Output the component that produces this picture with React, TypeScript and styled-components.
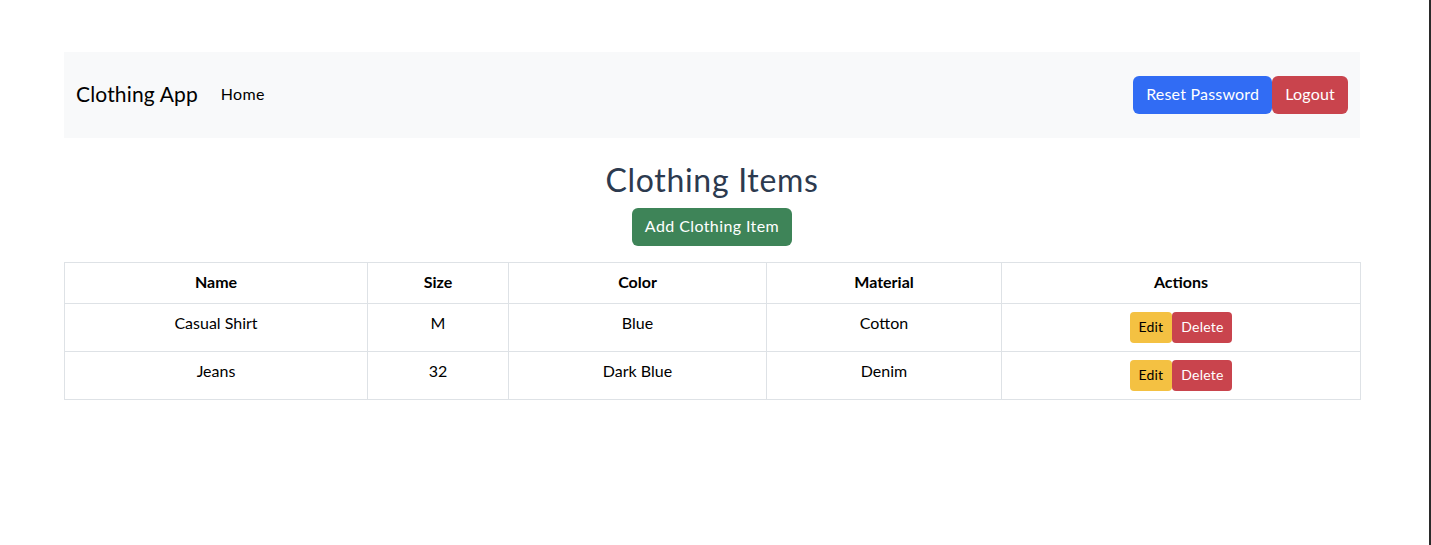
import React from "react";
import styled, { createGlobalStyle } from "styled-components";

const Global = createGlobalStyle`
  html, body { margin: 0; padding: 0; background: #fff; }
  body { font-family: Lato, "Noto Sans", sans-serif; font-size: 16px; line-height: 1.5; color: #212529; }
  * { box-sizing: border-box; }
`;

const Shell = styled.div`
  display: grid;
  grid-template-columns: 1fr 2px;
  min-height: 545px;
`;

const Main = styled.div`
  margin-right: 5px;
  padding-top: 52px;
`;

const Edge = styled.div`
  background: #2a2a2a;
`;

const Container = styled.div`
  max-width: 1320px;
  margin: 0 auto;
  padding: 0 12px;
`;

const Navbar = styled.nav`
  display: flex;
  align-items: center;
  justify-content: space-between;
  background: #f8f9fa;
  padding: 24px 12px;
`;

const NavLeft = styled.div`
  display: flex;
  align-items: center;
`;

const Brand = styled.span`
  font-size: 21px;
  letter-spacing: 0.15px;
  color: #000;
  margin-right: 23px;
  line-height: 28px;
  margin-top: -2px;
`;

const NavLink = styled.span`
  font-size: 16px;
  letter-spacing: 0.3px;
  color: #000;
  margin-top: -2px;
`;

const NavRight = styled.div`
  display: flex;
`;

const Button = styled.button<{ $bg: string; $fg?: string; $small?: boolean; $wide?: boolean }>`
  font-family: inherit;
  border: none;
  background: ${(p) => p.$bg};
  color: ${(p) => p.$fg || "#fff"};
  font-size: ${(p) => (p.$small ? "14px" : "16px")};
  letter-spacing: ${(p) => (p.$wide ? "0.4px" : "0.2px")};
  line-height: ${(p) => (p.$small ? "21px" : "24px")};
  padding: ${(p) => (p.$small ? "4px 9px 6px" : "6px 13px 8px")};
  border-radius: ${(p) => (p.$small ? "4px" : "6px")};
  cursor: pointer;
`;

const Heading = styled.h2`
  text-align: center;
  font-size: 32px;
  letter-spacing: 0.7px;
  font-weight: 400;
  color: #2c3a4f;
  margin: 22px 0 8px;
  line-height: 40px;
`;

const Center = styled.div`
  display: flex;
  justify-content: center;
  margin-bottom: 16px;
`;

const Table = styled.table`
  width: 100%;
  border-collapse: collapse;
  table-layout: fixed;
`;

const Th = styled.th`
  border: 1px solid #dee2e6;
  padding: 7px 8px 9px;
  font-weight: 700;
  text-align: center;
  color: #000;
`;

const Td = styled.td<{ $actions?: boolean }>`
  border: 1px solid #dee2e6;
  padding: ${(p) => (p.$actions ? "8px" : "7px 8px 9px")};
  text-align: center;
  vertical-align: top;
  color: #000;
  height: 48px;
`;

const Actions = styled.div`
  display: flex;
  justify-content: center;
`;

const items = [
  { name: "Casual Shirt", size: "M", color: "Blue", material: "Cotton" },
  { name: "Jeans", size: "32", color: "Dark Blue", material: "Denim" },
];

const widths = [303, 141, 258, 235, 359];

export default function App() {
  return (
    <>
      <Global />
      <Shell>
        <Main>
          <Container>
            <Navbar>
              <NavLeft>
                <Brand>Clothing App</Brand>
                <NavLink>Home</NavLink>
              </NavLeft>
              <NavRight>
                <Button $bg="#316cf4">Reset Password</Button>
                <Button $bg="#c9444d">Logout</Button>
              </NavRight>
            </Navbar>
            <Heading>Clothing Items</Heading>
            <Center>
              <Button $wide $bg="#3e8458">Add Clothing Item</Button>
            </Center>
            <Table>
              <colgroup>
                {widths.map((w, i) => (
                  <col key={i} style={{ width: w }} />
                ))}
              </colgroup>
              <thead>
                <tr>
                  <Th>Name</Th>
                  <Th>Size</Th>
                  <Th>Color</Th>
                  <Th>Material</Th>
                  <Th>Actions</Th>
                </tr>
              </thead>
              <tbody>
                {items.map((it) => (
                  <tr key={it.name}>
                    <Td>{it.name}</Td>
                    <Td>{it.size}</Td>
                    <Td>{it.color}</Td>
                    <Td>{it.material}</Td>
                    <Td $actions>
                      <Actions>
                        <Button $small $bg="#f4c142" $fg="#000">Edit</Button>
                        <Button $small $bg="#c9444d">Delete</Button>
                      </Actions>
                    </Td>
                  </tr>
                ))}
              </tbody>
            </Table>
          </Container>
        </Main>
        <Edge />
      </Shell>
    </>
  );
}
